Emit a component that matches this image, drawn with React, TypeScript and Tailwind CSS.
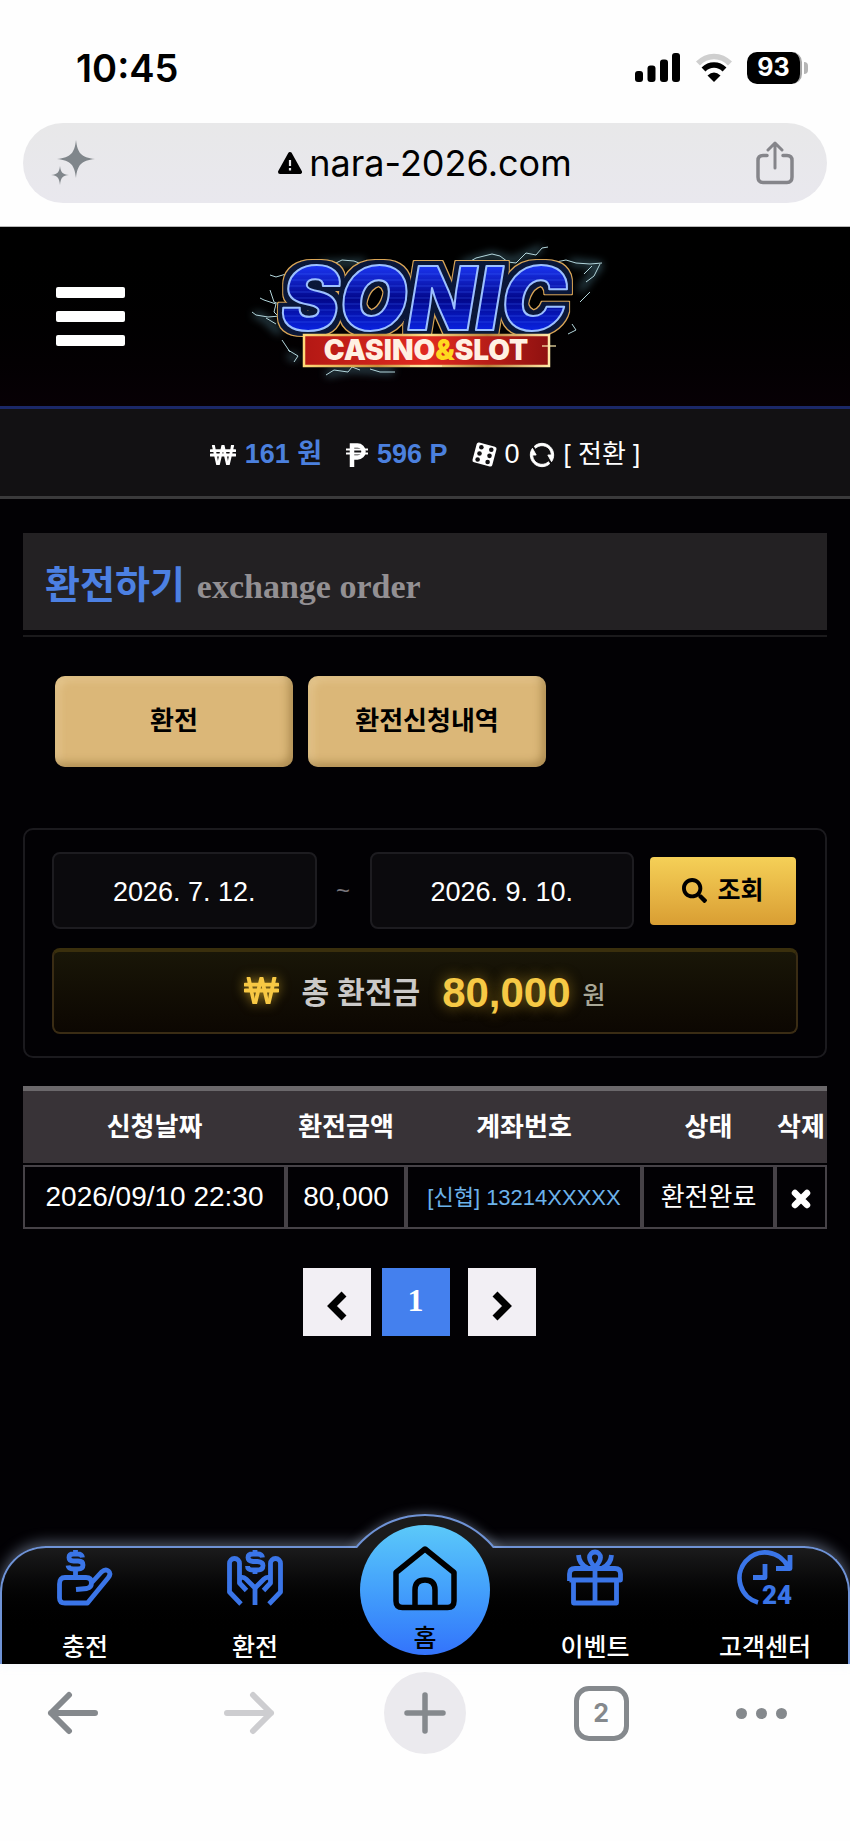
import { useState } from 'react';
import { FaSearch, FaWonSign } from 'react-icons/fa';
import { RiRefreshLine } from 'react-icons/ri';

const rows = [
  { date: '2026/09/10 22:30', amount: '80,000', account: '[신협] 13214XXXXX', status: '환전완료' },
];

const StatusBar = () => (
  <div className="flex h-[123px] items-center justify-between pr-[42px] pl-[76px] pt-3 font-['Inter',sans-serif]">
    <span className="text-[38px] leading-none font-semibold text-black">10:45</span>
    <div className="flex items-center gap-[14px]">
      <svg width="46" height="29" viewBox="0 0 46 29" aria-hidden="true">
        <rect x="0" y="18" width="8" height="11" rx="3" />
        <rect x="12.500" y="12.500" width="8" height="16.500" rx="3" />
        <rect x="25" y="6.500" width="8" height="22.500" rx="3" />
        <rect x="37" y="0" width="8" height="29" rx="3" />
      </svg>
      <svg width="38" height="29" viewBox="0 0 38 29" fill="none" aria-hidden="true">
        <path d="M3 10.500C12 1 26 1 35 10.500" stroke="#cfcfcf" strokeWidth="5.500" />
        <path d="M8.500 16.500C14.500 10.500 23.500 10.500 29.500 16.500" stroke="#000" strokeWidth="5.500" />
        <path d="M12.500 22.500Q19 16.500 25.500 22.500L19 29Z" fill="#000" />
      </svg>
      <div className="flex items-center">
        <span className="flex h-8 w-[55px] items-center justify-center rounded-[10px] border-r-2 border-[#a6a6a6] bg-black text-[25px] leading-none font-bold text-white">
          93
        </span>
        <span className="ml-[2px] h-3 w-1 rounded-r-full bg-[#b5b5b5]" />
      </div>
    </div>
  </div>
);

const AddressBar = () => (
  <div className="mx-[23px] mb-[23px] flex h-20 items-center justify-between rounded-full bg-linear-to-b from-[#e8e8e9] to-[#e9e8ee] px-[27px]">
    <button aria-label="AI">
      <svg width="46" height="46" viewBox="0 0 46 46" fill="#80868b" aria-hidden="true">
        <path d="M26 0C27.500 13 31 17.500 45 19C31 20.500 27.500 25 26 38C24.500 25 21 20.500 7 19C21 17.500 24.500 13 26 0Z" />
        <path d="M10 26C10.800 32.500 12.500 34.200 19 35C12.500 35.800 10.800 37.500 10 45C9.200 37.500 7.500 35.800 1 35C7.500 34.200 9.200 32.500 10 26Z" />
      </svg>
    </button>
    <div className="flex items-center gap-[7px]">
      <svg width="24" height="24" viewBox="0 0 24 24" aria-hidden="true">
        <path d="M12 3L22 21H2Z" stroke="#000" strokeWidth="4" strokeLinejoin="round" />
        <path d="M12 9V15M12 17V19.500" stroke="#e8e8eb" strokeWidth="2.200" />
      </svg>
      <span className="font-['Inter',sans-serif] text-[36px] leading-none text-black">nara-2026.com</span>
    </div>
    <button aria-label="공유" className="mr-1">
      <svg width="42" height="44" viewBox="0 0 42 44" fill="none" stroke="#85858a" strokeWidth="3.500" strokeLinecap="round" strokeLinejoin="round" aria-hidden="true">
        <path d="M13 14.500H9Q4 14.500 4 19.500V36Q4 41.500 9 41.500H33Q38 41.500 38 36V19.500Q38 14.500 33 14.500H29" />
        <path d="M21 27V2.500M14 9L21 2L28 9" strokeWidth="3" />
      </svg>
    </button>
  </div>
);

const Logo = () => (
  <svg width="400" height="178" viewBox="-5 0 400 178" role="img" aria-label="SONIC CASINO&SLOT">
    <defs>
      <linearGradient id="letter" x1="0" y1="38" x2="0" y2="104" gradientUnits="userSpaceOnUse">
        <stop offset="0" stopColor="#1a34f0" />
        <stop offset="0.5" stopColor="#02078a" />
        <stop offset="1" stopColor="#0a24e4" />
      </linearGradient>
      <pattern id="lined" width="400" height="178" patternUnits="userSpaceOnUse">
        <rect width="400" height="178" fill="url(#letter)" />
        <path
          d="M0 46H400M0 52H400M0 58H400M0 64H400M0 70H400M0 76H400M0 82H400M0 88H400M0 94H400"
          stroke="#3c62ff"
          strokeWidth="0.800"
          opacity="0.5"
        />
      </pattern>
      <linearGradient id="gold" x1="0" y1="0" x2="1" y2="0">
        <stop offset="0" stopColor="#ffd978" />
        <stop offset="0.3" stopColor="#c98f3a" />
        <stop offset="0.5" stopColor="#ffe08a" />
        <stop offset="0.75" stopColor="#b9813a" />
        <stop offset="1" stopColor="#ffe9a8" />
      </linearGradient>
      <linearGradient id="banner" x1="0" y1="0" x2="1" y2="0">
        <stop offset="0" stopColor="#b31814" />
        <stop offset="0.5" stopColor="#e02a20" />
        <stop offset="1" stopColor="#8f1110" />
      </linearGradient>
      <filter id="glow" x="-30%" y="-30%" width="160%" height="160%">
        <feGaussianBlur stdDeviation="4" />
      </filter>
      {/* Navy rim with a thin gold edge around the letters */}
      <filter id="rim" x="-10%" y="-20%" width="120%" height="140%" colorInterpolationFilters="sRGB">
        <feMorphology in="SourceAlpha" operator="dilate" radius="5" result="wide" />
        <feGaussianBlur in="wide" stdDeviation="0.7" result="wideSoft" />
        <feFlood floodColor="#d9a556" />
        <feComposite in2="wideSoft" operator="in" result="goldRim" />
        <feMorphology in="SourceAlpha" operator="dilate" radius="4" result="narrow" />
        <feGaussianBlur in="narrow" stdDeviation="0.7" result="narrowSoft" />
        <feFlood floodColor="#0a1738" />
        <feComposite in2="narrowSoft" operator="in" result="navyRim" />
        <feMerge>
          <feMergeNode in="goldRim" />
          <feMergeNode in="navyRim" />
          <feMergeNode in="SourceGraphic" />
        </feMerge>
      </filter>
    </defs>
    <g fill="none" strokeLinejoin="round">
      <g stroke="#5f97ab" strokeWidth="5" filter="url(#glow)" opacity="0.6">
        <path d="M50 105L34 90L24 86M58 128L68 130M96 146L120 141L164 143M232 36L262 27L282 33L312 20M340 34L370 37L350 62M90 36L135 34" />
      </g>
      <g stroke="#b3d6dc" strokeWidth="1">
        <path d="M52 92L44 84L46 76L34 72L30 70M50 88L38 89L26 87L22 84M54 78L44 74L40 62M56 46L46 49L40 47M46 96L36 90" />
        <path d="M96 147L104 142L118 144L122 139L130 142M140 141L150 144L165 144M58 122L68 128L64 134M52 112L60 124" />
        <path d="M90 34L104 36L112 32L124 33L134 37M72 36L74 42M232 38L246 30L262 26L270 28L278 34L286 35L296 25L306 27L312 20L318 19" />
        <path d="M326 34L336 32L346 35L360 36L372 35M370 36L364 48L356 54M362 38L354 46M360 64L350 74M342 96L346 102L338 106" />
      </g>
    </g>
    <text
      x="51"
      y="102"
      fontFamily="Inter, sans-serif"
      fontWeight="900"
      fontStyle="italic"
      fontSize="88"
      fill="url(#lined)"
      stroke="#9cc0ff"
      strokeWidth="2"
      strokeLinejoin="round"
      filter="url(#rim)"
    >
      SONIC
    </text>
    <rect x="74" y="107" width="245" height="31" fill="url(#banner)" stroke="url(#gold)" strokeWidth="2.500" />
    <text x="196" y="132" textAnchor="middle" fontFamily="Inter, sans-serif" fontWeight="900" fontSize="28" fill="#fff0e2">
      CASINO<tspan fill="#ffd81f">&amp;</tspan>SLOT
    </text>
    <path d="M312 118H326M319 111V126M180 138H212" stroke="#ffeeb0" strokeWidth="1.500" opacity="0.8" />
  </svg>
);

const PesoIcon = () => (
  <svg width="22" height="24" viewBox="0 0 22 24" fill="none" stroke="currentColor" aria-hidden="true">
    <path d="M6 24V2.500H11.500A5.500 5.500 0 0 1 11.500 14.500H6" strokeWidth="4.500" />
    <path d="M0 6.500H22M0 10.500H22" strokeWidth="2" />
  </svg>
);

const DiceIcon = () => (
  <svg width="25" height="25" viewBox="0 0 24 24" aria-hidden="true">
    <path d="M7 0.500L22 4.500Q24 5 23.500 7L19.500 22Q19 24 17 23.500L2 19.500Q0 19 .5 17L4.500 2Q5 0 7 0.500Z" fill="#fff" />
    <g fill="#121113">
      <circle cx="9" cy="5" r="2.200" />
      <circle cx="7.200" cy="11" r="2.200" />
      <circle cx="5.400" cy="16.800" r="2.200" />
      <circle cx="18.500" cy="7.500" r="2.200" />
      <circle cx="16.800" cy="13.300" r="2.200" />
      <circle cx="15" cy="19.200" r="2.200" />
    </g>
  </svg>
);

const DepositIcon = () => (
  <>
    <path d="M25.500 7.500Q25 4 20.500 4H16.500Q12 4 12 7.500Q12 11 16.500 11H21Q26 11 26 15Q26 19 21 19H16.500Q11.500 19 11 15.500M18.500 0V4M18.500 19V27" />
    <path d="M19 39.500L30 38.500Q34.500 37.500 34.500 33Q34.500 27.500 29 27.500H8Q2.500 27.500 2.500 34V48Q2.500 53 8 53H30.500L51 28Q54.500 23.500 51.500 21Q48.500 18.500 44.500 22L33.500 34" />
  </>
);

const WithdrawIcon = () => (
  <>
    <path d="M35.500 7.500Q35 4 30.500 4H26Q21 4 21 7.500Q21 11 26 11.500H30.500Q36 12 36 15.500Q36 20 30.500 20H26Q20.500 20 20.500 16M28 0V4M28 20V24" />
    <path d="M14 54L2.500 42V13.500A5 5 0 0 1 12.500 13.500V33L19.500 40.500M12.500 28.500Q15.500 26 19 29L28 38V55" />
    <path d="M42 54L53.500 42V13.500A5 5 0 0 0 43.500 13.500V33L36.500 40.500M43.500 28.500Q40.500 26 37 29L28 38" />
  </>
);

const EventIcon = () => (
  <>
    <path d="M6.500 31V53H49.500V31M2.500 31V24Q2.500 18.500 8 18.500H48Q53.500 18.500 53.500 24V30H2.500M28 18V53" />
    <path d="M28 17.500Q22.500 11 22.500 7.500A5.500 5.500 0 0 1 33.500 7.500Q33.500 11 28 17.500M11.500 5Q12 14 20.500 18M44.500 5Q44 14 35.500 18" />
  </>
);

const SupportIcon = () => (
  <>
    <path d="M21 52.500A25.500 25.500 0 1 1 51 17M39 18.500H53V5M28 14V27.500H16" />
    <text x="40" y="54" textAnchor="middle" fontFamily="Roboto, sans-serif" fontWeight="900" fontSize="26" fill="currentColor" stroke="none">
      24
    </text>
  </>
);

const navItems = [
  { label: '충전', icon: DepositIcon },
  { label: '환전', icon: WithdrawIcon },
  { label: '홈', icon: null },
  { label: '이벤트', icon: EventIcon },
  { label: '고객센터', icon: SupportIcon },
];

const BottomNav = () => (
  <nav className="relative h-[118px] rounded-t-[46px] border-2 border-b-0 border-[#6f93d6] bg-linear-to-b from-[#1b1b1c] to-black to-75% shadow-[0_-4px_14px_rgba(190,210,240,0.4)]">
    {/* Raised arc behind the home button */}
    <div className="absolute -top-[46px] left-1/2 h-[46px] w-[180px] -translate-x-1/2 overflow-hidden">
      <div className="mx-auto mt-[12px] size-[180px] rounded-full border-2 border-[#6f93d6] bg-[#1b1b1c] shadow-[0_0_12px_rgba(190,210,240,0.4)]" />
    </div>
    <ul className="relative -mx-[2px] flex h-full">
      {navItems.map(({ label, icon: Icon }) => (
        <li key={label} className="flex flex-1 justify-center">
          {Icon ? (
            <a href="#" className="flex flex-col items-center pt-[2px] text-[#3a75e8]">
              <svg width="56" height="56" viewBox="0 0 56 56" fill="none" stroke="currentColor" strokeWidth="4.800" strokeLinejoin="round" className="shrink-0 overflow-visible" aria-hidden="true">
                <Icon />
              </svg>
              <span className="mt-[26px] text-[25px] leading-[30px] font-medium text-white">{label}</span>
            </a>
          ) : (
            <a
              href="#"
              className="-mt-[23px] flex size-[130px] flex-col items-center rounded-full bg-linear-to-b from-[#5cc9f9] to-[#3473fb] pt-5 text-black"
            >
              <svg width="66" height="66" viewBox="0 0 66 66" fill="none" stroke="currentColor" strokeWidth="5.500" strokeLinejoin="round" className="shrink-0" aria-hidden="true">
                <path d="M33 4L62 27.500V56Q62 62.500 55.500 62.500H10.500Q4 62.500 4 56V27.500Z" />
                <path d="M23 62V45Q23 35 33 35Q43 35 43 45V62" />
              </svg>
              <span className="mt-3 text-[25px] leading-[30px] font-medium">{label}</span>
            </a>
          )}
        </li>
      ))}
    </ul>
  </nav>
);

const Toolbar = () => (
  <div className="flex h-[177px] items-start bg-[#fefefe] pt-2 text-[#85898d]">
    <div className="flex flex-1 justify-center">
      <button aria-label="뒤로" className="mr-6 flex h-[82px] items-center">
        <svg width="52" height="44" viewBox="0 0 52 44" fill="none" stroke="currentColor" strokeWidth="6" strokeLinecap="round" strokeLinejoin="round" aria-hidden="true">
          <path d="M48 22H4M22 4L4 22L22 40" />
        </svg>
      </button>
    </div>
    <div className="flex flex-1 justify-center">
      <button aria-label="앞으로" className="mr-3 flex h-[82px] items-center text-[#cdcdd0]">
        <svg width="52" height="44" viewBox="0 0 52 44" fill="none" stroke="currentColor" strokeWidth="6" strokeLinecap="round" strokeLinejoin="round" aria-hidden="true">
          <path d="M4 22H48M30 4L48 22L30 40" />
        </svg>
      </button>
    </div>
    <div className="flex flex-1 justify-center">
      <button aria-label="새 탭" className="flex size-[82px] items-center justify-center rounded-full bg-[#ebeaee]">
        <svg width="42" height="42" viewBox="0 0 42 42" stroke="currentColor" strokeWidth="5.500" strokeLinecap="round" aria-hidden="true">
          <path d="M21 3V39M3 21H39" />
        </svg>
      </button>
    </div>
    <div className="flex flex-1 justify-center">
      <button aria-label="탭" className="ml-3 flex h-[82px] items-center">
        <span className="flex size-[55px] items-center justify-center rounded-[15px] border-5 border-current font-['Inter',sans-serif] text-[25px] leading-none font-bold">
          2
        </span>
      </button>
    </div>
    <div className="flex flex-1 justify-center">
      <button aria-label="더보기" className="mr-2 flex h-[82px] items-center gap-[9px]">
        <span className="size-[11px] rounded-full bg-current" />
        <span className="size-[11px] rounded-full bg-current" />
        <span className="size-[11px] rounded-full bg-current" />
      </button>
    </div>
  </div>
);

const App = () => {
  const [from, setFrom] = useState('2026. 7. 12.');
  const [to, setTo] = useState('2026. 9. 10.');

  const orderButton =
    'h-[91px] w-[238px] rounded-[10px] bg-[#dbb778] text-[26px] font-bold text-black shadow-[inset_-4px_-4px_8px_rgba(90,60,10,0.35),inset_4px_4px_8px_rgba(255,240,200,0.3)]';
  const dateInput =
    'h-[77px] w-0 flex-1 rounded-[8px] border-2 border-[#1d1c20] bg-[#0b0a0d] pt-1 text-center text-[27px] text-white';
  const pageButton = 'flex size-[68px] items-center justify-center bg-[#f2eff4] text-black';
  const cell = 'h-[64px] border-2 border-[#464247] p-0';

  return (
    <div className="flex min-h-screen flex-col bg-[#fefefe] font-['Liberation_Sans','Noto_Sans_CJK_KR',sans-serif]">
      <StatusBar />
      <AddressBar />

      <div className="flex flex-1 flex-col border-t border-[#b9b9b9] bg-[#020104] text-white">
        <header className="grid h-[182px] grid-cols-[1fr_400px_1fr] items-center border-b-3 border-[#1b2868] bg-linear-to-b from-black to-[#070005]">
          <button aria-label="메뉴" className="ml-14 flex w-[69px] flex-col gap-[13px]">
            <span className="h-[11px] rounded-[2px] bg-white" />
            <span className="h-[11px] rounded-[2px] bg-white" />
            <span className="h-[11px] rounded-[2px] bg-white" />
          </button>
          <Logo />
        </header>

        <div className="flex h-[90px] items-center justify-center border-b-3 border-[#3a3a3b] bg-[#121113] pt-1 text-[27px]">
          <FaWonSign className="mr-[9px] size-[26px]" />
          <span className="mr-6 font-bold text-[#4b80de]">161 원</span>
          <PesoIcon />
          <span className="mr-6 ml-[9px] font-bold text-[#4b80de]">596 P</span>
          <DiceIcon />
          <span className="mx-2">0</span>
          <RiRefreshLine className="mr-2 size-7" stroke="currentColor" strokeWidth="0.8" />
          <button className="text-[26px]">[ 전환 ]</button>
        </div>

        <main className="flex-1 px-[23px] pt-[34px]">
          <div className="border-b-2 border-[#1b1a1c] pb-[5px]">
            <h1 className="flex h-[97px] items-baseline gap-3 bg-[#232123] px-[22px] pt-6 text-[38px] leading-[56px] font-bold text-[#4c80e2]">
              환전하기
              <small className="font-['Liberation_Serif',serif] text-[34px] text-[#939093]">exchange order</small>
            </h1>
          </div>

          <div className="mt-[39px] flex gap-[15px] pl-8">
            <button className={orderButton}>환전</button>
            <button className={orderButton}>환전신청내역</button>
          </div>

          <section className="mt-[61px] rounded-[10px] border-2 border-[#1b1a1e] px-[27px] pt-[22px] pb-[22px]">
            <form className="flex items-center pr-[2px]" onSubmit={(e) => e.preventDefault()}>
              <input aria-label="시작일" className={dateInput} value={from} onChange={(e) => setFrom(e.target.value)} />
              <span className="w-[53px] text-center text-[24px] text-[#77747a]">~</span>
              <input aria-label="종료일" className={dateInput} value={to} onChange={(e) => setTo(e.target.value)} />
              <button className="ml-4 flex h-[68px] w-[146px] items-center justify-center gap-[10px] rounded-[4px] bg-linear-to-b from-[#f5d057] to-[#d99e33] text-[25px] font-bold text-black">
                <FaSearch className="size-[25px]" />
                조회
              </button>
            </form>
            <div className="mt-[19px] flex h-[86px] items-center justify-center rounded-[8px] border-2 border-t-4 border-[#3a2c14] border-t-[#3a2f0d] bg-linear-to-b from-[#191608] to-[#0c0702]">
              <span className="mb-1 text-[#f7c844]">
                <FaWonSign className="size-[35px] drop-shadow-[0_0_6px_rgba(250,200,50,0.6)]" />
              </span>
              <span className="ml-[22px] text-[30px] font-bold text-[#cbc9c8]">총 환전금</span>
              <strong className="ml-[22px] text-[42px] text-[#f6c945] [text-shadow:0_0_14px_rgba(250,200,50,0.5)]">
                80,000
              </strong>
              <span className="mt-2 ml-3 text-[25px] font-medium text-[#a9a796]">원</span>
            </div>
          </section>

          <table className="mt-7 w-full table-fixed border-separate border-spacing-0 text-center whitespace-nowrap">
            <thead>
              <tr className="bg-[#383337] text-[26px] font-bold">
                <th className="h-[77px] w-[263px] border-t-5 border-[#6b686b] p-0">신청날짜</th>
                <th className="w-[120px] border-t-5 border-[#6b686b] p-0">환전금액</th>
                <th className="w-[236px] border-t-5 border-[#6b686b] p-0">계좌번호</th>
                <th className="w-[133px] border-t-5 border-[#6b686b] p-0">상태</th>
                <th className="border-t-5 border-[#6b686b] p-0">삭제</th>
              </tr>
            </thead>
            <tbody>
              <tr aria-hidden="true">
                <td colSpan={5} className="h-[2px] p-0" />
              </tr>
              {rows.map((row) => (
                <tr key={row.date}>
                  <td className={`${cell} text-[28px]`}>{row.date}</td>
                  <td className={`${cell} text-[28px]`}>{row.amount}</td>
                  <td className={`${cell} text-[22px] text-[#6cb2ea]`}>{row.account}</td>
                  <td className={`${cell} text-[26px]`}>{row.status}</td>
                  <td className={cell}>
                    <button aria-label="삭제" className="block w-full">
                      <svg width="20" height="20" viewBox="0 0 20 20" className="mx-auto mt-1" stroke="#fff" strokeWidth="6.500" strokeLinecap="round" aria-hidden="true">
                        <path d="M4 4L16 16M16 4L4 16" />
                      </svg>
                    </button>
                  </td>
                </tr>
              ))}
            </tbody>
          </table>

          <div className="mt-[39px] mb-16 flex justify-center pr-3">
            <button aria-label="이전" className={pageButton}>
              <svg width="20" height="30" viewBox="0 0 20 30" fill="none" stroke="currentColor" strokeWidth="7" aria-hidden="true" className="mt-2">
                <path d="M17 3L5 15L17 27" />
              </svg>
            </button>
            <button className="mr-[18px] ml-[11px] size-[68px] bg-[#4480ee] pb-1 font-['Liberation_Serif',serif] text-[32px] font-bold text-white">
              1
            </button>
            <button aria-label="다음" className={pageButton}>
              <svg width="20" height="30" viewBox="0 0 20 30" fill="none" stroke="currentColor" strokeWidth="7" aria-hidden="true" className="mt-2">
                <path d="M3 3L15 15L3 27" />
              </svg>
            </button>
          </div>
        </main>

        <BottomNav />
      </div>

      <Toolbar />
    </div>
  );
};

export default App;
